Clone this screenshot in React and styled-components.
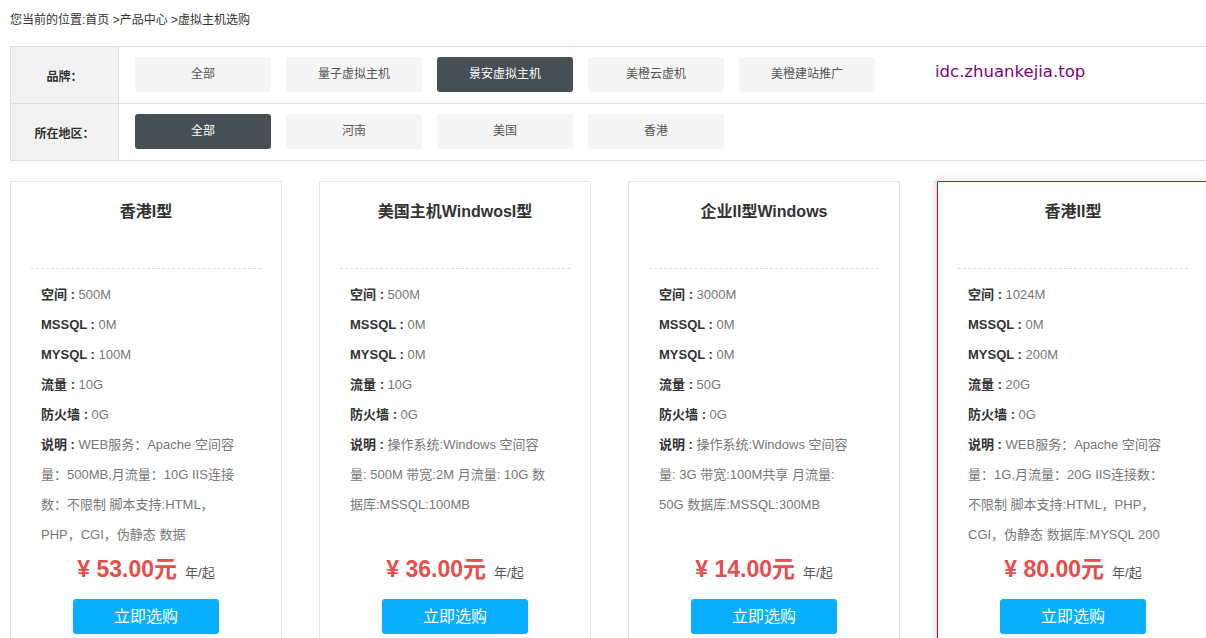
import React from 'react'
import styled, { createGlobalStyle } from 'styled-components'

const GlobalStyle = createGlobalStyle`
  html, body {
    margin: 0;
    padding: 0;
    overflow: hidden;
    background: #fff;
  }
  body {
    font-family: "Liberation Sans", Arial, "Noto Sans CJK SC", sans-serif;
    color: #333;
  }
`

const brands = ['全部', '量子虚拟主机', '景安虚拟主机', '美橙云虚机', '美橙建站推广']
const regions = ['全部', '河南', '美国', '香港']

const plans = [
  {
    name: '香港I型',
    specs: [['空间', '500M'], ['MSSQL', '0M'], ['MYSQL', '100M'], ['流量', '10G'], ['防火墙', '0G']],
    desc: ['WEB服务：Apache 空间容', '量：500MB,月流量：10G IIS连接', '数：不限制 脚本支持:HTML，', 'PHP，CGI，伪静态 数据'],
    price: '53.00',
  },
  {
    name: '美国主机WindwosI型',
    specs: [['空间', '500M'], ['MSSQL', '0M'], ['MYSQL', '0M'], ['流量', '10G'], ['防火墙', '0G']],
    desc: ['操作系统:Windows 空间容', '量: 500M 带宽:2M 月流量: 10G 数', '据库:MSSQL:100MB'],
    price: '36.00',
  },
  {
    name: '企业II型Windows',
    specs: [['空间', '3000M'], ['MSSQL', '0M'], ['MYSQL', '0M'], ['流量', '50G'], ['防火墙', '0G']],
    desc: ['操作系统:Windows 空间容', '量: 3G 带宽:100M共享 月流量:', '50G 数据库:MSSQL:300MB'],
    price: '14.00',
  },
  {
    name: '香港II型',
    specs: [['空间', '1024M'], ['MSSQL', '0M'], ['MYSQL', '200M'], ['流量', '20G'], ['防火墙', '0G']],
    desc: ['WEB服务：Apache 空间容', '量：1G,月流量：20G IIS连接数：', '不限制 脚本支持:HTML，PHP，', 'CGI，伪静态 数据库:MYSQL 200'],
    price: '80.00',
    hover: true,
  },
]

export default function App() {
  return (
    <Page>
      <GlobalStyle />
      <Crumb>您当前的位置:首页 &gt;产品中心 &gt;虚拟主机选购</Crumb>

      <Filter>
        <FilterRow>
          <FilterLabel>品牌：</FilterLabel>
          <FilterValues>
            {brands.map((b, i) => (
              <Chip key={b} $active={i === 2}>{b}</Chip>
            ))}
            <Watermark>idc.zhuankejia.top</Watermark>
          </FilterValues>
        </FilterRow>
        <FilterRow>
          <FilterLabel>所在地区：</FilterLabel>
          <FilterValues>
            {regions.map((r, i) => (
              <Chip key={r} $active={i === 0}>{r}</Chip>
            ))}
          </FilterValues>
        </FilterRow>
      </Filter>

      <Cards>
        {plans.map(p => (
          <Card key={p.name} $hover={p.hover}>
            <CardTitle>{p.name}</CardTitle>
            <SpecList>
              {p.specs.map(([k, v]) => (
                <SpecLine key={k}><b>{k} :</b> {v}</SpecLine>
              ))}
              <Desc>
                {p.desc.map((line, i) => (
                  <SpecLine key={i}>{i === 0 && <b>说明 : </b>}{line}</SpecLine>
                ))}
              </Desc>
            </SpecList>
            <PriceRow>
              <Price>¥ {p.price}元</Price>
              <Unit>年/起</Unit>
            </PriceRow>
            <BuyButton>立即选购</BuyButton>
          </Card>
        ))}
      </Cards>
    </Page>
  )
}

const Page = styled.div`
  width: 1200px;
  padding-left: 10px;
`

const Crumb = styled.div`
  font-size: 12px;
  line-height: 20px;
  padding-top: 10px;
  margin-bottom: 16px;
  color: #333;
`

const Filter = styled.div`
  border-top: 1px solid #ddd;
  border-left: 1px solid #ddd;
`

const FilterRow = styled.div`
  display: flex;
  border-bottom: 1px solid #ddd;
`

const FilterLabel = styled.div`
  width: 107px;
  flex-shrink: 0;
  background: #f2f2f2;
  border-right: 1px solid #ddd;
  display: flex;
  align-items: center;
  justify-content: center;
  font-size: 12px;
  font-weight: bold;
  color: #333;
`

const FilterValues = styled.div`
  display: flex;
  align-items: center;
  gap: 15px;
  padding: 10px 16px 11px;
`

const Chip = styled.div`
  width: 136px;
  height: 35px;
  line-height: 35px;
  text-align: center;
  font-size: 12px;
  border-radius: 3px;
  background: ${p => (p.$active ? '#454f54' : '#f5f5f5')};
  color: ${p => (p.$active ? '#fff' : '#555')};
`

const Watermark = styled.div`
  margin-left: 45px;
  margin-top: -6px;
  font-family: "DejaVu Sans", Verdana, sans-serif;
  font-size: 16.5px;
  color: #800080;
`

const Cards = styled.div`
  display: flex;
  gap: 37px;
  margin-top: 20px;
`

const Card = styled.div`
  width: 272px;
  flex-shrink: 0;
  box-sizing: border-box;
  height: 480px;
  padding: 15px 20px 0;
  border: 1px solid ${p => (p.$hover ? '#e0101e' : '#e3e3e3')};
  box-shadow: ${p => (p.$hover ? '-2px 0 8px rgba(0, 0, 0, 0.15)' : 'none')};
  background: #fff;
`

const CardTitle = styled.div`
  height: 71px;
  line-height: 30px;
  text-align: center;
  font-size: 16px;
  font-weight: bold;
  color: #333;
  border-bottom: 1px dashed #ddd;
`

const SpecList = styled.div`
  padding: 11px 10px 0;
`

const SpecLine = styled.div`
  font-size: 13px;
  line-height: 30px;
  height: 30px;
  color: #777;
  white-space: nowrap;
  overflow: hidden;

  b {
    color: #333;
  }
`

const Desc = styled.div`
  height: 120px;
  overflow: hidden;
`

const PriceRow = styled.div`
  display: flex;
  align-items: baseline;
  justify-content: center;
  gap: 8px;
  height: 30px;
`

const Price = styled.span`
  font-size: 23px;
  font-weight: bold;
  color: #e84c4c;
`

const Unit = styled.span`
  font-size: 13px;
  color: #555;
`

const BuyButton = styled.div`
  width: 146px;
  height: 35px;
  line-height: 35px;
  margin: 19px auto 0;
  text-align: center;
  background: #0aaeff;
  color: #fff;
  font-size: 16px;
  border-radius: 3px;
`
